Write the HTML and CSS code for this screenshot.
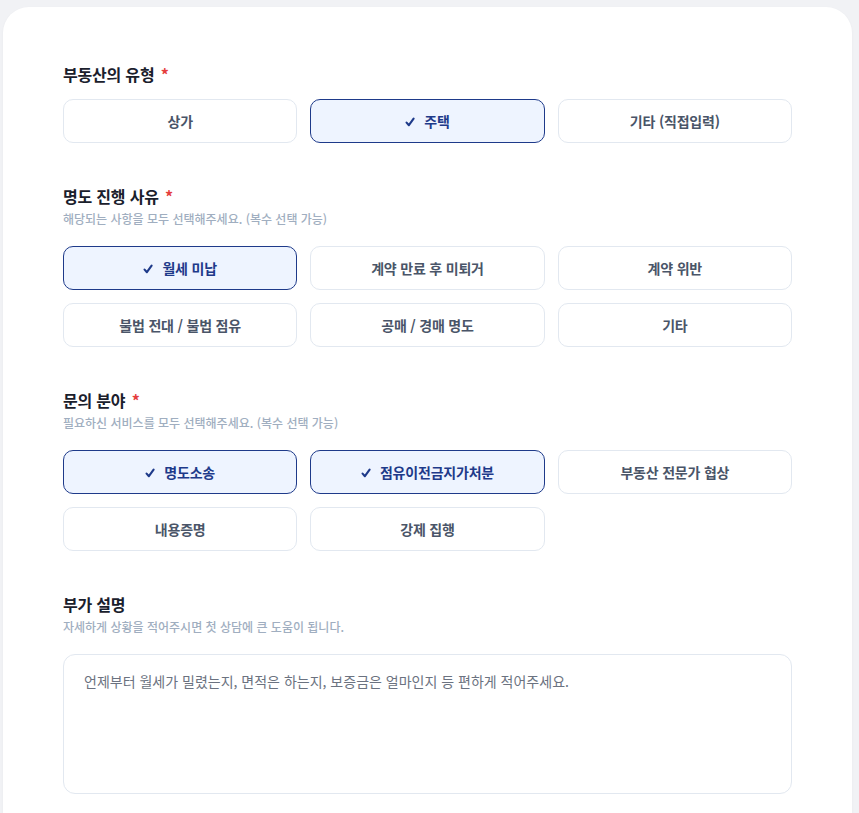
FILE: index.html
```html
<!DOCTYPE html>
<html lang="ko">
<head>
<meta charset="utf-8">
<title>명도 상담 신청</title>
<link rel="stylesheet" href="styles.css">
</head>
<body>
<main class="card">
  <section class="field">
    <h2 class="field-title">부동산의 유형 <span class="req">*</span></h2>
    <div class="options">
      <button class="opt">상가</button>
      <button class="opt selected"><svg class="check" viewBox="0 0 10 10" aria-hidden="true"><polyline points="1.6,5.6 3.9,8.2 8.6,1.6"/></svg>주택</button>
      <button class="opt">기타 (직접입력)</button>
    </div>
  </section>

  <section class="field">
    <h2 class="field-title">명도 진행 사유 <span class="req">*</span></h2>
    <p class="field-desc">해당되는 사항을 모두 선택해주세요. (복수 선택 가능)</p>
    <div class="options">
      <button class="opt selected"><svg class="check" viewBox="0 0 10 10" aria-hidden="true"><polyline points="1.6,5.6 3.9,8.2 8.6,1.6"/></svg>월세 미납</button>
      <button class="opt">계약 만료 후 미퇴거</button>
      <button class="opt">계약 위반</button>
      <button class="opt">불법 전대 / 불법 점유</button>
      <button class="opt">공매 / 경매 명도</button>
      <button class="opt">기타</button>
    </div>
  </section>

  <section class="field">
    <h2 class="field-title">문의 분야 <span class="req">*</span></h2>
    <p class="field-desc">필요하신 서비스를 모두 선택해주세요. (복수 선택 가능)</p>
    <div class="options">
      <button class="opt selected"><svg class="check" viewBox="0 0 10 10" aria-hidden="true"><polyline points="1.6,5.6 3.9,8.2 8.6,1.6"/></svg>명도소송</button>
      <button class="opt selected"><svg class="check" viewBox="0 0 10 10" aria-hidden="true"><polyline points="1.6,5.6 3.9,8.2 8.6,1.6"/></svg>점유이전금지가처분</button>
      <button class="opt">부동산 전문가 협상</button>
      <button class="opt">내용증명</button>
      <button class="opt">강제 집행</button>
    </div>
  </section>

  <section class="field">
    <h2 class="field-title">부가 설명</h2>
    <p class="field-desc">자세하게 상황을 적어주시면 첫 상담에 큰 도움이 됩니다.</p>
    <textarea class="memo" placeholder="언제부터 월세가 밀렸는지, 면적은 하는지, 보증금은 얼마인지 등 편하게 적어주세요."></textarea>
  </section>
</main>
</body>
</html>
```

FILE: styles.css
```css
html, body {
  margin: 0;
  padding: 0;
}

body {
  background: #f1f2f5;
  padding: 7px 7px 0 3px;
  font-family: "Noto Sans CJK KR", "Noto Sans", sans-serif;
  color: #1a202c;
}

.card {
  background: #ffffff;
  border-radius: 26px 26px 0 0;
  width: 849px;
  box-sizing: border-box;
  padding: 55px 60px 40px 60px;
  min-height: 820px;
  box-shadow: 0 1px 3px rgba(15, 23, 42, 0.04);
}

.field + .field {
  margin-top: 41px;
}

.field-title {
  margin: 0;
  font-size: 16px;
  line-height: 24px;
  font-weight: 700;
  color: #1a202c;
  letter-spacing: -0.2px;
}

.req {
  color: #e53e3e;
  margin-left: 2px;
}

.field-title + .options {
  margin-top: 13px;
}

.field-desc {
  margin: 2px 0 0;
  font-size: 12px;
  line-height: 18px;
  font-weight: 500;
  color: #a0aec0;
}

.field-desc + .options,
.field-desc + .memo {
  margin-top: 18px;
}

.options {
  display: grid;
  grid-template-columns: repeat(3, 1fr);
  gap: 13px;
}

.opt {
  height: 44px;
  border: 1px solid #e2e8f0;
  border-radius: 10px;
  background: #ffffff;
  font-family: inherit;
  font-size: 14px;
  font-weight: 600;
  color: #4a5568;
  letter-spacing: -0.2px;
  display: flex;
  align-items: center;
  justify-content: center;
  padding: 0 12px;
  cursor: pointer;
}

.opt.selected {
  background: #eef4ff;
  border-color: #1e3a8a;
  color: #1e3a8a;
  font-weight: 700;
}

.check {
  width: 10px;
  height: 10px;
  margin-right: 9px;
  margin-top: 1px;
  fill: none;
  stroke: currentColor;
  stroke-width: 2.1;
  stroke-linecap: round;
  stroke-linejoin: round;
}

.memo {
  display: block;
  width: 100%;
  height: 140px;
  box-sizing: border-box;
  border: 1px solid #e2e8f0;
  border-radius: 12px;
  padding: 15px 20px;
  font-family: inherit;
  font-size: 14px;
  line-height: 22px;
  color: #1a202c;
  resize: none;
  outline: none;
}

.memo::placeholder {
  color: #6b7280;
}
```
